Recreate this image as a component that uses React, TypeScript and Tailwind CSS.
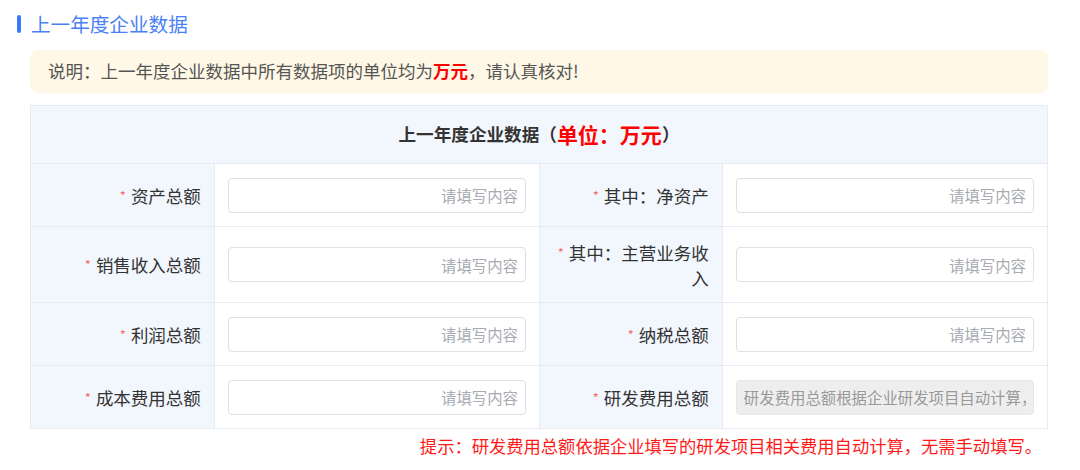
import React from "react";

const font = { fontFamily: '"Noto Sans CJK SC", "Noto Sans", sans-serif' };

function Label({ text, left }: { text: string; left?: boolean }) {
  return (
    <div
      className={`bg-[#f2f7fd] border-t border-[#e6ebf2] flex items-center justify-end text-right pl-[14px] pr-[13px] py-[12.5px] text-[17.5px] leading-[25px] text-[#333] ${
        left ? "border-l" : ""
      }`}
    >
      <div>
        <span className="text-[#f56c6c] text-[13px] mr-[5px] align-[2px]">*</span>
        {text}
      </div>
    </div>
  );
}

function Field({ disabled }: { disabled?: boolean }) {
  return (
    <div className="bg-white border-t border-l border-[#e6ebf2] flex items-center px-[13px] py-[13.5px]">
      {disabled ? (
        <input
          disabled
          value="研发费用总额根据企业研发项目自动计算，无需手动填写"
          readOnly
          className="w-full h-[35px] rounded-[4px] border border-[#e4e7ed] bg-[#eeeeee] px-[7px] text-[15.4px] text-[#999] outline-none"
          style={font}
        />
      ) : (
        <input
          placeholder="请填写内容"
          className="w-full h-[35px] rounded-[4px] border border-[#dcdfe6] bg-white px-[7px] text-right text-[15.4px] text-[#333] placeholder:text-[#a8abb2] outline-none"
          style={font}
        />
      )}
    </div>
  );
}

export default function App() {
  const rows: [string, string, boolean?][] = [
    ["资产总额", "其中：净资产"],
    ["销售收入总额", "其中：主营业务收入"],
    ["利润总额", "纳税总额"],
    ["成本费用总额", "研发费用总额", true],
  ];
  return (
    <div className="w-[1080px] h-[470px] bg-white overflow-hidden" style={font}>
      <div className="flex items-center pl-[17px] pt-[14px] h-[34px]">
        <div className="w-[4px] h-[18px] rounded-full bg-[#3a7afe]" />
        <div className="ml-[10px] text-[19.6px] leading-[20px] text-[#4a80f8]">上一年度企业数据</div>
      </div>
      <div className="ml-[30px] mr-[32px] mt-[16px] h-[43px] rounded-[8px] bg-[#fff8e6] flex items-center pl-[18px] text-[17.5px] text-[#555]">
        说明：上一年度企业数据中所有数据项的单位均为
        <span className="text-[#ff0000] font-bold">万元</span>
        ，请认真核对!
      </div>
      <div className="ml-[30px] mr-[32px] mt-[12px]">
        <div className="border border-[#e6ebf2]">
          <div className="h-[57px] bg-[#f2f7fd] flex items-center justify-center font-bold text-[17.6px] text-[#333]">
            上一年度企业数据（<span className="text-[#ff0000] text-[21px]">单位：万元</span>）
          </div>
          <div className="grid grid-cols-[18%_32%_18%_32%]">
            {rows.map(([a, b, dis], i) => (
              <React.Fragment key={i}>
                <Label text={a} />
                <Field />
                <Label text={b} left />
                <Field disabled={dis} />
              </React.Fragment>
            ))}
          </div>
        </div>
        <div className="text-right pr-[6px] mt-[4px] text-[17.3px] leading-[26px] text-[#ff1a1a]">
          提示：研发费用总额依据企业填写的研发项目相关费用自动计算，无需手动填写。
        </div>
      </div>
    </div>
  );
}
